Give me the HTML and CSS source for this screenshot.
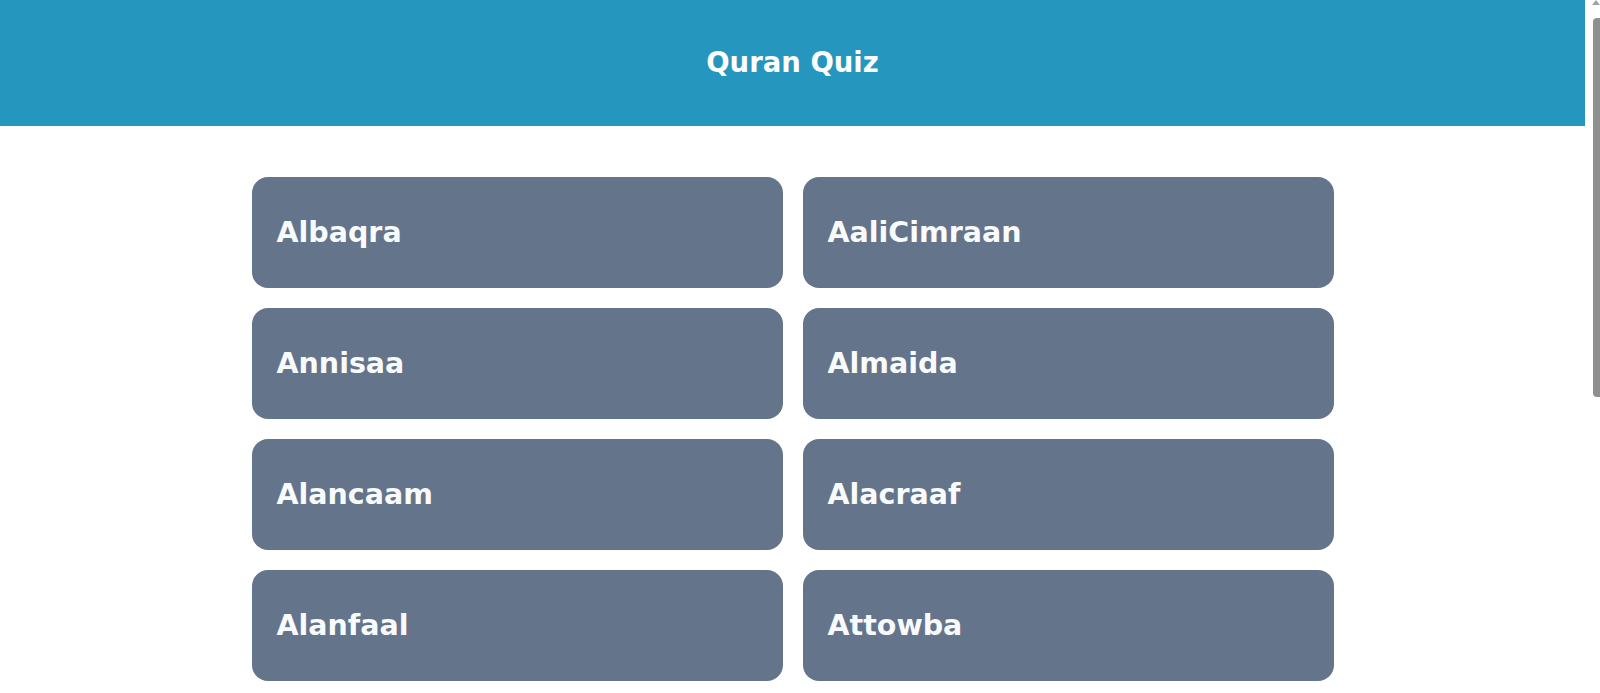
FILE: index.html
```html
<!DOCTYPE html>
<html lang="en">
<head>
<meta charset="utf-8">
<title>Quran Quiz</title>
<link rel="stylesheet" href="styles.css">
</head>
<body>
<div class="page">
  <div class="content">
    <header class="topbar">
      <h1 class="title">Quran Quiz</h1>
    </header>
    <main class="list">
      <a class="card" href="#">Albaqra</a>
      <a class="card" href="#">AaliCimraan</a>
      <a class="card" href="#">Annisaa</a>
      <a class="card" href="#">Almaida</a>
      <a class="card" href="#">Alancaam</a>
      <a class="card" href="#">Alacraaf</a>
      <a class="card" href="#">Alanfaal</a>
      <a class="card" href="#">Attowba</a>
    </main>
  </div>
  <div class="scrollbar">
    <div class="arrow"></div>
    <div class="thumb"></div>
  </div>
</div>
</body>
</html>
```
FILE: styles.css
```css
html, body {
  margin: 0;
  padding: 0;
  background: #ffffff;
  overflow: hidden;
}
body {
  font-family: "DejaVu Sans", "Noto Sans", sans-serif;
}
.page {
  display: flex;
  height: 693px;
}
.content {
  flex: 1;
  min-width: 0;
}
.topbar {
  height: 126px;
  background: #2596be;
  display: flex;
  align-items: center;
  justify-content: center;
}
.title {
  margin: 0 0 3px;
  color: #ffffff;
  font-size: 27.5px;
  font-weight: 700;
}
.list {
  width: 1082px;
  margin: 51px auto 0;
  display: grid;
  grid-template-columns: 1fr 1fr;
  gap: 20px;
  grid-auto-rows: 111px;
}
.card {
  display: flex;
  align-items: center;
  padding-left: 25px;
  background: #64748b;
  border-radius: 16px;
  color: #f8fafc;
  text-decoration: none;
  font-size: 28.5px;
  font-weight: 700;
}
.scrollbar {
  width: 15px;
  display: flex;
  flex-direction: column;
  align-items: flex-end;
}
.arrow {
  width: 0;
  height: 0;
  border-left: 4px solid transparent;
  border-right: 4px solid transparent;
  border-bottom: 5px solid #a3a3a3;
}
.thumb {
  margin-top: 13px;
  width: 7px;
  height: 379px;
  background: #8f8f8f;
  border-radius: 4px 0 0 4px;
}
```
